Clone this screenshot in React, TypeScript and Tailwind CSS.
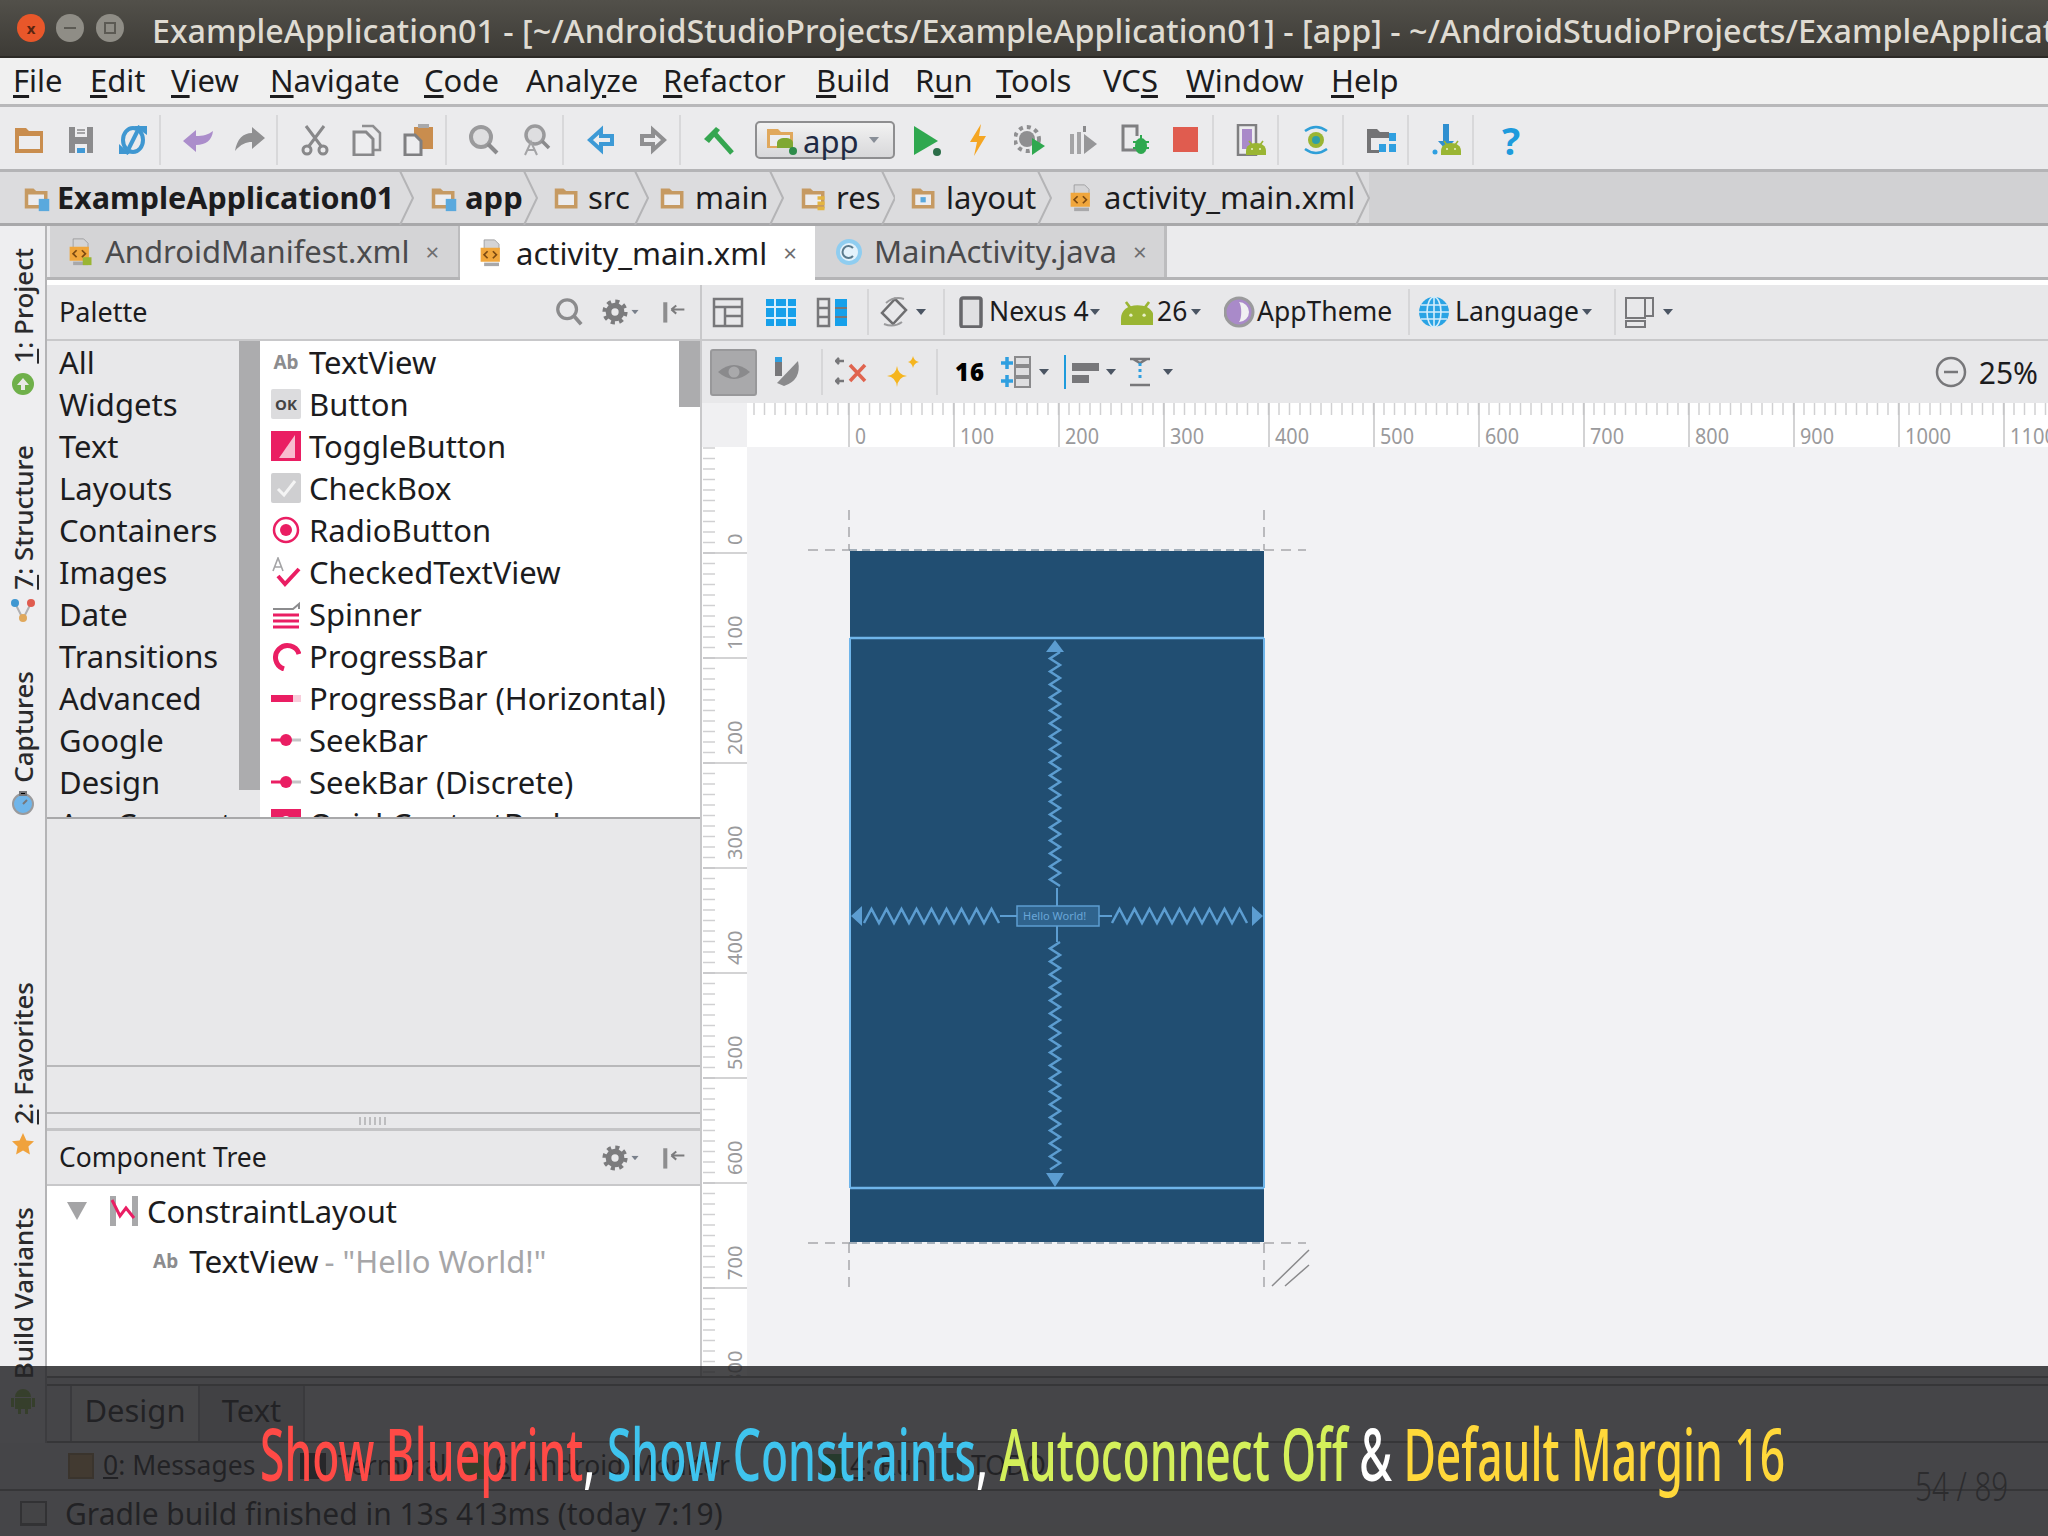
import type { ReactNode } from 'react'

function Ico({ children, className = '' }: { children: ReactNode; className?: string }) {
  return (
    <svg viewBox="0 0 32 32" className={`w-8 h-8 shrink-0 ${className}`}>
      {children}
    </svg>
  )
}

function Arrow({ className = '' }: { className?: string }) {
  return (
    <svg viewBox="0 0 10 6" className={`w-[10px] h-[6px] shrink-0 ${className}`}>
      <path d="M0 0h10L5 6z" fill="#4b5563" />
    </svg>
  )
}

function Sep({ className = '' }: { className?: string }) {
  return <div className={`w-[2px] h-[46px] bg-[#d6d6d8] shrink-0 ${className}`} />
}

function Droid({ x = 0, y = 0, s = 1 }: { x?: number; y?: number; s?: number }) {
  return (
    <g transform={`translate(${x} ${y}) scale(${s})`}>
      <path d="M3 0l3 4M17 0l-3 4" stroke="#9ab533" strokeWidth="1.6" />
      <path d="M0 14V10C0 5 4 2 10 2s10 3 10 8v4z" fill="#9ab533" />
      <circle cx="6" cy="8" r="1" fill="#e8f0c8" />
      <circle cx="14" cy="8" r="1" fill="#e8f0c8" />
    </g>
  )
}

function Gear() {
  return (
    <Ico className="!w-[26px] !h-[26px]">
      <circle cx="16" cy="16" r="8" fill="none" stroke="#7b7b7d" strokeWidth="7" />
      <circle cx="16" cy="16" r="13" fill="none" stroke="#7b7b7d" strokeWidth="5" strokeDasharray="5 5.2" />
    </Ico>
  )
}

function Pin() {
  return (
    <Ico className="!w-[26px] !h-[26px]">
      <rect x="4" y="4" width="5" height="25" fill="#8d8d8f" />
      <path d="M14 13h16M14 13l6-5M14 13l6 5" stroke="#7b7b7d" strokeWidth="2.5" fill="none" />
    </Ico>
  )
}

function FolderSmall({ color = '#c69a62', badge }: { color?: string; badge?: string }) {
  return (
    <Ico className="!w-7 !h-7">
      <path d="M2 5h10l3 3h13v20H2z" fill={color} />
      <rect x="6" y="12" width="18" height="12" fill="#ececee" />
      {badge === 'blue' && <rect x="18" y="17" width="12" height="14" fill="#5aa9dd" />}
      {badge === 'res' && <path d="M20 14h8v4h-8zM20 20h8v4h-8zM20 26h8v4h-8z" fill="#e3b541" />}
      {badge === 'layout' && <rect x="12" y="15" width="6" height="6" fill="#5aa9dd" />}
    </Ico>
  )
}

function XmlFile({ dim = false }: { dim?: boolean }) {
  return (
    <Ico className="!w-7 !h-7">
      <path d="M7 1h12l5 5v6H7z" fill="#d4d4d6" stroke="#9a9a9c" />
      <rect x="3" y="10" width="22" height="16" fill="#f0a63c" />
      <path d="M11 14l-4 4 4 4M17 14l4 4-4 4" stroke="#7c4a12" strokeWidth="2" fill="none" />
      <rect x="7" y="27" width="17" height="4" fill="#a8a8aa" />
      {dim && <path d="M18 22h10v9H18z" fill="#9ab533" />}
    </Ico>
  )
}

const menus = [
  { pre: '', u: 'F', post: 'ile', w: 'w-[77px]' },
  { pre: '', u: 'E', post: 'dit', w: 'w-[81px]' },
  { pre: '', u: 'V', post: 'iew', w: 'w-[99px]' },
  { pre: '', u: 'N', post: 'avigate', w: 'w-[154px]' },
  { pre: '', u: 'C', post: 'ode', w: 'w-[102px]' },
  { pre: 'Anal', u: 'y', post: 'ze', w: 'w-[137px]' },
  { pre: '', u: 'R', post: 'efactor', w: 'w-[153px]' },
  { pre: '', u: 'B', post: 'uild', w: 'w-[99px]' },
  { pre: 'R', u: 'u', post: 'n', w: 'w-[81px]' },
  { pre: '', u: 'T', post: 'ools', w: 'w-[107px]' },
  { pre: 'VC', u: 'S', post: '', w: 'w-[83px]' },
  { pre: '', u: 'W', post: 'indow', w: 'w-[145px]' },
  { pre: '', u: 'H', post: 'elp', w: 'w-auto' },
]

const crumbs = [
  { label: 'ExampleApplication01', w: 'w-[415px] pl-[23px]', bold: true, color: '#c69a62', badge: 'blue', gap: 'ml-[6px] text-[30.500px]' },
  { label: 'app', w: 'w-[123px] pl-[15px]', bold: true, color: '#c69a62', badge: 'blue', gap: 'ml-[7px]' },
  { label: 'src', w: 'w-[112px] pl-[15px]', bold: false, color: '#c69a62', badge: '', gap: 'ml-[7px]' },
  { label: 'main', w: 'w-[135px] pl-[9px]', bold: false, color: '#c69a62', badge: '', gap: 'ml-[8px]' },
  { label: 'res', w: 'w-[110px] pl-[15px]', bold: false, color: '#c69a62', badge: 'res', gap: 'ml-[8px]' },
  { label: 'layout', w: 'w-[158px] pl-[15px]', bold: false, color: '#c69a62', badge: 'layout', gap: 'ml-[8px]' },
]

function Chevron() {
  return (
    <svg viewBox="0 0 16 54" className="w-4 h-[54px] shrink-0 -ml-4">
      <path d="M1 0l13 27L1 54" fill="none" stroke="#b4b4b6" strokeWidth="2" />
    </svg>
  )
}

function Btn({ children }: { children: ReactNode }) {
  return <div className="w-[52px] flex justify-center shrink-0">{children}</div>
}

function BarSep() {
  return (
    <div className="w-[13px] flex justify-start shrink-0">
      <div className="w-[2px] h-[50px] bg-[#d8d8da]" />
    </div>
  )
}

function MainToolbar() {
  return (
    <div className="h-[65px] flex items-center pl-[3px] pt-[4px] bg-[#ebebed] border-b-[3px] border-[#b4b4b6]">
      <Btn>
        <Ico>
          <path d="M2 4h11l3 3h14v22H2z" fill="#c98d4e" />
          <rect x="6" y="12" width="21" height="13" fill="#ededef" />
        </Ico>
      </Btn>
      <Btn>
        <Ico>
          <path d="M4 3h24v26H4z" fill="#8b8b8d" />
          <rect x="10" y="3" width="12" height="10" fill="#ededef" />
          <path d="M12 6h8M12 9h8" stroke="#8b8b8d" strokeWidth="1.5" />
          <rect x="10" y="20" width="12" height="9" fill="#ededef" />
          <rect x="12" y="24" width="8" height="5" fill="#4099d6" />
        </Ico>
      </Btn>
      <Btn>
        <Ico>
          <ellipse cx="16" cy="16" rx="10" ry="12" fill="none" stroke="#3f97d1" strokeWidth="4" />
          <path d="M23 2L9 30" stroke="#3f97d1" strokeWidth="4" />
          <path d="M17 2h13v9zM2 30V20l11 10z" fill="#3f97d1" />
        </Ico>
      </Btn>
      <BarSep />
      <Btn>
        <Ico>
          <path d="M1 17L14 6v6c7 0 12-1 17-5-1 9-7 14-17 14v7z" fill="#ab8dcb" />
        </Ico>
      </Btn>
      <Btn>
        <Ico>
          <path d="M31 14L18 3v6C9 9 3 15 1 27c6-7 11-9 17-9v7z" fill="#8f8f91" />
        </Ico>
      </Btn>
      <BarSep />
      <Btn>
        <Ico>
          <circle cx="8" cy="26" r="4" fill="none" stroke="#88888a" strokeWidth="3" />
          <circle cx="24" cy="26" r="4" fill="none" stroke="#88888a" strokeWidth="3" />
          <path d="M10 22L25 2M22 22L7 2" stroke="#88888a" strokeWidth="3" />
        </Ico>
      </Btn>
      <Btn>
        <Ico>
          <path d="M11 2h11l7 7v17h-7" fill="none" stroke="#8f8f91" strokeWidth="2.5" />
          <path d="M3 8h12l7 7v16H3z" fill="#ededef" stroke="#88888a" strokeWidth="3" />
        </Ico>
      </Btn>
      <Btn>
        <Ico>
          <rect x="11" y="3" width="19" height="22" fill="#c98d4e" />
          <rect x="15" y="0" width="11" height="4" fill="#a8a8aa" />
          <path d="M2 11h10l6 6v14H2z" fill="#ededef" stroke="#7f7f81" strokeWidth="3" />
        </Ico>
      </Btn>
      <BarSep />
      <Btn>
        <Ico>
          <circle cx="13" cy="13" r="10" fill="#dedee0" stroke="#9a9a9c" strokeWidth="4" />
          <path d="M20 20l9 9" stroke="#8a8a8c" strokeWidth="4" />
        </Ico>
      </Btn>
      <Btn>
        <Ico>
          <circle cx="15" cy="11" r="9" fill="#dedee0" stroke="#9a9a9c" strokeWidth="3.5" />
          <path d="M22 17l7 7" stroke="#8a8a8c" strokeWidth="3.5" />
          <path d="M5 31l6-13 6 13M7 26h8" stroke="#a4a4a6" strokeWidth="2" fill="none" />
        </Ico>
      </Btn>
      <BarSep />
      <Btn>
        <Ico>
          <path d="M5 16L16 6v6h11v8H16v6z" fill="#ededef" stroke="#3d9ad6" strokeWidth="4" />
        </Ico>
      </Btn>
      <Btn>
        <Ico>
          <path d="M27 16L16 6v6H5v8h11v6z" fill="#ededef" stroke="#8f8f91" strokeWidth="4" />
        </Ico>
      </Btn>
      <BarSep />
      <Btn>
        <Ico>
          <path d="M2 15L14 3l4 3-11 13z" fill="#35a650" />
          <path d="M13 10l17 19" stroke="#35a650" strokeWidth="5" />
        </Ico>
      </Btn>
      <div className="ml-[11px] w-[140px] h-[38px] shrink-0 flex items-center rounded-[5px] border-2 border-[#8e8e90] bg-gradient-to-b from-[#f2f2f2] to-[#d8d8da]">
        <Ico className="ml-2">
          <path d="M2 5h11l3 3h12v16H2z" fill="#e0a85c" />
          <rect x="5" y="11" width="20" height="11" fill="#ededef" />
          <path d="M12 24v-5c0-3 3-5 8-5s8 2 8 5v5z" fill="#7fa832" />
          <circle cx="28" cy="27" r="4" fill="#2e8b4a" />
        </Ico>
        <span className="text-[31px] leading-none text-[#1f2a44] ml-[6px] mt-[3px]">app</span>
        <Arrow className="ml-auto mr-[14px] opacity-60" />
      </div>
      <div className="w-[5px] shrink-0" />
      <Btn>
        <Ico>
          <path d="M4 2l24 15L4 31z" fill="#2fa84f" />
          <circle cx="27" cy="28" r="4" fill="#2c6e49" />
        </Ico>
      </Btn>
      <Btn>
        <Ico>
          <path d="M19 0L8 18h7l-3 14 12-20h-7z" fill="#f5a623" />
        </Ico>
      </Btn>
      <Btn>
        <Ico>
          <circle cx="13" cy="15" r="8" fill="#8f8f91" />
          <circle cx="13" cy="15" r="12" fill="none" stroke="#8f8f91" strokeWidth="4" strokeDasharray="4 4" />
          <path d="M18 14l13 8-13 9z" fill="#2fa84f" />
        </Ico>
      </Btn>
      <Btn>
        <Ico>
          <path d="M4 10h4v20H4zM11 8h4v22h-4z" fill="#a4a4a6" />
          <path d="M18 10l13 10-13 10z" fill="#969698" />
          <path d="M17 2h3v6h-3z" fill="#8a8a8c" />
        </Ico>
      </Btn>
      <Btn>
        <Ico>
          <path d="M19 26H5V2h14v10" fill="none" stroke="#7f7f81" strokeWidth="3" />
          <ellipse cx="23" cy="22" rx="6" ry="8" fill="#2fa84f" />
          <path d="M15 18h16M15 24h16M23 11v4" stroke="#2fa84f" strokeWidth="2" />
        </Ico>
      </Btn>
      <Btn>
        <Ico>
          <rect x="3" y="3" width="25" height="25" fill="#e05c4f" />
        </Ico>
      </Btn>
      <BarSep />
      <Btn>
        <Ico>
          <rect x="3" y="1" width="18" height="30" fill="#ededef" stroke="#7f7f81" strokeWidth="2.5" />
          <rect x="7" y="5" width="10" height="20" fill="#a98ac9" />
          <Droid x={11} y={17} s={1} />
        </Ico>
      </Btn>
      <BarSep />
      <Btn>
        <Ico>
          <path d="M5 7Q16-1 27 7M5 25Q16 33 27 25" stroke="#2f9fd8" strokeWidth="2.5" fill="none" />
          <circle cx="16" cy="16" r="8" fill="#9ab533" />
          <circle cx="16" cy="16" r="4" fill="#2f9fa8" />
        </Ico>
      </Btn>
      <BarSep />
      <Btn>
        <Ico>
          <path d="M2 5h10l3 3h9v6H6v12h8v3H2z" fill="#737375" />
          <path d="M24 9h7v8h-7zM14 20h7v8h-7zM24 20h7v8h-7z" fill="#2f9fe0" />
        </Ico>
      </Btn>
      <BarSep />
      <Btn>
        <Ico>
          <path d="M13 0h6v17h5l-8 9-8-9h5z" fill="#2f8fd0" />
          <circle cx="5" cy="28" r="2.5" fill="#2f9fe0" />
          <Droid x={11} y={17} s={1} />
        </Ico>
      </Btn>
      <BarSep />
      <Btn>
        <span className="text-[38px] leading-none font-bold text-[#1e9bdc]">?</span>
      </Btn>
    </div>
  )
}

const categories = ['All', 'Widgets', 'Text', 'Layouts', 'Containers', 'Images', 'Date', 'Transitions', 'Advanced', 'Google', 'Design', 'AppCompat']

const PINK = '#ea1e63'

const widgets: { label: string; icon: ReactNode }[] = [
  { label: 'TextView', icon: <span className="text-[19px] font-bold text-[#8c8c8e]">Ab</span> },
  {
    label: 'Button',
    icon: (
      <span className="w-[30px] h-[30px] flex items-center justify-center bg-[#dcdcde] rounded-[2px] text-[15px] font-bold text-[#444]">OK</span>
    ),
  },
  {
    label: 'ToggleButton',
    icon: (
      <svg viewBox="0 0 30 30" className="w-[30px] h-[30px]">
        <rect width="30" height="30" fill={PINK} />
        <path d="M8 27L24 4v23z" fill="#f8bcd0" />
      </svg>
    ),
  },
  {
    label: 'CheckBox',
    icon: (
      <svg viewBox="0 0 30 30" className="w-[30px] h-[30px]">
        <rect width="30" height="30" rx="2" fill="#cfcfd1" />
        <path d="M7 16l6 6 11-14" stroke="#f4f4f4" strokeWidth="3" fill="none" />
      </svg>
    ),
  },
  {
    label: 'RadioButton',
    icon: (
      <svg viewBox="0 0 30 30" className="w-[30px] h-[30px]">
        <circle cx="15" cy="15" r="12" fill="none" stroke={PINK} strokeWidth="2.500" />
        <circle cx="15" cy="15" r="6" fill={PINK} />
      </svg>
    ),
  },
  {
    label: 'CheckedTextView',
    icon: (
      <svg viewBox="0 0 30 30" className="w-[30px] h-[30px]">
        <path d="M2 14L7 1l5 13M4 10h6" stroke="#a4a4a6" strokeWidth="1.6" fill="none" />
        <path d="M7 19l7 8L28 12" stroke={PINK} strokeWidth="4" fill="none" />
      </svg>
    ),
  },
  {
    label: 'Spinner',
    icon: (
      <svg viewBox="0 0 30 30" className="w-[30px] h-[30px]">
        <path d="M2 10h20l6-5v5" stroke="#8c8c8e" strokeWidth="2" fill="none" />
        <path d="M2 16h26M2 22h26M2 28h26" stroke={PINK} strokeWidth="3" />
      </svg>
    ),
  },
  {
    label: 'ProgressBar',
    icon: (
      <svg viewBox="0 0 30 30" className="w-[30px] h-[30px]">
        <path d="M28 13A12 12 0 1 0 13 28" fill="none" stroke={PINK} strokeWidth="5" />
      </svg>
    ),
  },
  {
    label: 'ProgressBar (Horizontal)',
    icon: (
      <svg viewBox="0 0 30 30" className="w-[30px] h-[30px]">
        <rect x="-2" y="12" width="24" height="7" fill={PINK} />
        <rect x="22" y="12" width="8" height="7" fill="#f8cddb" />
      </svg>
    ),
  },
  {
    label: 'SeekBar',
    icon: (
      <svg viewBox="0 0 30 30" className="w-[30px] h-[30px]">
        <path d="M-2 15h16" stroke={PINK} strokeWidth="3" />
        <path d="M18 15h12" stroke="#c4c4c6" strokeWidth="3" />
        <circle cx="15" cy="15" r="6" fill={PINK} />
      </svg>
    ),
  },
  {
    label: 'SeekBar (Discrete)',
    icon: (
      <svg viewBox="0 0 30 30" className="w-[30px] h-[30px]">
        <path d="M-2 15h16" stroke={PINK} strokeWidth="3" />
        <path d="M18 15h12" stroke="#c4c4c6" strokeWidth="3" />
        <circle cx="15" cy="15" r="6" fill={PINK} />
      </svg>
    ),
  },
  {
    label: 'QuickContactBadge',
    icon: (
      <svg viewBox="0 0 30 30" className="w-[30px] h-[30px]">
        <rect width="30" height="30" fill={PINK} />
        <circle cx="15" cy="12" r="5" fill="#fff" />
      </svg>
    ),
  },
]

function PalettePanel() {
  return (
    <div className="w-[655px] shrink-0 flex flex-col bg-[#e8e8ea] border-r-2 border-[#c8c8ca] text-[#1c1c1e]">
      <div className="h-[56px] shrink-0 flex items-center pl-3 border-b-2 border-[#c8c8ca]">
        <span className="text-[27px]">Palette</span>
        <Ico className="ml-auto !w-[30px] !h-[30px]">
          <circle cx="14" cy="13" r="10" fill="none" stroke="#8b8b8d" strokeWidth="3.5" />
          <path d="M21 20l8 9" stroke="#8b8b8d" strokeWidth="4" />
        </Ico>
        <div className="ml-[18px]"><Gear /></div>
        <Arrow className="ml-[2px] scale-75 opacity-70" />
        <div className="ml-[20px] mr-[14px]"><Pin /></div>
      </div>
      <div className="h-[478px] shrink-0 flex overflow-hidden border-b-2 border-[#a8a8aa]">
        <div className="w-[192px] shrink-0 pl-3 text-[31px]">
          {categories.map((c) => (
            <div key={c} className="h-[42px] flex items-center whitespace-nowrap">{c}</div>
          ))}
        </div>
        <div className="w-[21px] shrink-0 h-[449px] bg-[#acacae]" />
        <div className="flex-1 bg-white pl-[11px] text-[31px]">
          {widgets.map((w) => (
            <div key={w.label} className="h-[42px] flex items-center whitespace-nowrap">
              <div className="w-[30px] flex justify-center shrink-0">{w.icon}</div>
              <span className="ml-[8px]">{w.label}</span>
            </div>
          ))}
        </div>
        <div className="w-[21px] shrink-0 bg-white">
          <div className="h-[66px] bg-[#acacae]" />
        </div>
      </div>
      <div className="h-[248px] shrink-0 border-b-2 border-[#b8b8ba]" />
      <div className="h-[47px] shrink-0 border-b-2 border-[#b8b8ba]" />
      <div className="h-[17px] shrink-0 flex items-center justify-center border-b-[3px] border-[#c4c4c6]">
        <div className="w-[30px] h-[8px] bg-[repeating-linear-gradient(90deg,#bdbdbf_0_2px,transparent_2px_5px)]" />
      </div>
      <div className="h-[55px] shrink-0 flex items-center pl-3 border-b-2 border-[#c8c8ca]">
        <span className="text-[26.500px]">Component Tree</span>
        <div className="ml-auto"><Gear /></div>
        <Arrow className="ml-[2px] scale-75 opacity-70" />
        <div className="ml-[20px] mr-[14px]"><Pin /></div>
      </div>
      <div className="flex-1 bg-white">
        <div className="h-[50px] flex items-center pl-[20px]">
          <svg viewBox="0 0 20 18" className="w-5 h-[18px] shrink-0">
            <path d="M0 0h20L10 18z" fill="#a4a4a6" />
          </svg>
          <svg viewBox="0 0 30 30" className="w-[30px] h-[30px] ml-[22px] shrink-0">
            <path d="M1 0h6v30H1zM23 0h6v30h-6z" fill="#a8a8aa" />
            <path d="M3 4l8 16 6-8 8 10" stroke={PINK} strokeWidth="3" fill="none" />
          </svg>
          <span className="text-[31px] ml-[8px]">ConstraintLayout</span>
        </div>
        <div className="h-[50px] flex items-center pl-[106px] whitespace-nowrap">
          <span className="text-[19px] font-bold text-[#8c8c8e]">Ab</span>
          <span className="text-[31.500px] ml-[11px]">TextView</span>
          <span className="text-[31px] text-[#a6a6a8] ml-[6px]">- "Hello World!"</span>
        </div>
      </div>
    </div>
  )
}

function DesignBarTop() {
  return (
    <div className="h-[56px] shrink-0 flex items-center border-b-2 border-[#c8c8ca] text-[26.500px] text-[#1c1c1e] whitespace-nowrap">
      <Ico className="ml-[10px]">
        <path d="M2 3h28v27H2zM2 11h28M13 11v19M13 20h17" fill="none" stroke="#77777a" strokeWidth="2.5" />
      </Ico>
      <Ico className="ml-[21px]">
        <rect x="1" y="3" width="30" height="27" fill="#16a0ea" />
        <path d="M10 3v27M22 3v27M1 11h30M1 22h30" stroke="#d8eefb" strokeWidth="2" />
      </Ico>
      <Ico className="ml-[19px]">
        <path d="M2 3h11v27H2zM2 12h11M2 21h11" fill="none" stroke="#77777a" strokeWidth="2.5" />
        <rect x="19" y="3" width="12" height="27" fill="#16a0ea" />
        <path d="M19 12h12M19 21h12" stroke="#77777a" strokeWidth="2" />
      </Ico>
      <Sep className="ml-[19px]" />
      <Ico className="ml-[9px]">
        <path d="M17 3l11 11-13 14L4 17z" fill="none" stroke="#6e6e70" strokeWidth="2.5" />
        <path d="M8 7Q16 0 26 3M24 26Q16 32 6 28" fill="none" stroke="#9a9a9c" strokeWidth="2" />
      </Ico>
      <Arrow className="ml-[6px]" />
      <Sep className="ml-[17px]" />
      <Ico className="ml-[14px]">
        <rect x="2" y="2" width="20" height="29" rx="2" fill="#e0e0e2" stroke="#66666a" strokeWidth="3.5" />
      </Ico>
      <span className="-ml-[2px] w-[97px]">Nexus 4</span>
      <Arrow className="ml-[4px]" />
      <Ico className="ml-[21px]"><Droid x={0} y={6} s={1.65} /></Ico>
      <span className="ml-[4px] w-[27px]">26</span>
      <Arrow className="ml-[7px]" />
      <Ico className="ml-[23px]">
        <circle cx="15" cy="16" r="14" fill="#a98ac9" stroke="#9a9a9c" strokeWidth="3" />
        <path d="M15 6a10 10 0 0 1 0 20c3-4 3-16 0-20z" fill="#f0f0f2" />
      </Ico>
      <span className="ml-[1px] w-[135px]">AppTheme</span>
      <Sep className="ml-[16px]" />
      <Ico className="ml-[8px]">
        <circle cx="16" cy="16" r="15" fill="#2aa3e4" />
        <path d="M1 16h30M16 1v30M3 9h26M3 23h26" stroke="#d4edfb" strokeWidth="1.6" />
        <ellipse cx="16" cy="16" rx="7" ry="15" fill="none" stroke="#d4edfb" strokeWidth="1.6" />
      </Ico>
      <span className="ml-[5px] w-[120px]">Language</span>
      <Arrow className="ml-[7px]" />
      <Sep className="ml-[22px]" />
      <Ico className="ml-[8px]">
        <path d="M2 2h19v20H2zM21 2h8v18h-8M2 25h19v6H2z" fill="none" stroke="#77777a" strokeWidth="2" />
      </Ico>
      <Arrow className="ml-[7px]" />
    </div>
  )
}

function DesignBarBottom() {
  return (
    <div className="h-[62px] shrink-0 flex items-center">
      <div className="ml-[8px] w-[47px] h-[47px] flex items-center justify-center rounded-[3px] bg-[#a9a9ab] border-2 border-[#98989a]">
        <Ico>
          <path d="M0 16Q16 2 32 16 16 30 0 16z" fill="#8a8a8c" />
          <circle cx="16" cy="16" r="5.500" fill="#a9a9ab" />
        </Ico>
      </div>
      <Ico className="ml-[13px]">
        <path d="M5 6h7v14H5z" fill="#77777a" />
        <path d="M5 1h7v5H5z" fill="#2f9fe0" />
        <path d="M28 5Q32 24 14 30L7 27 28 5z" fill="#8a8a8c" />
      </Ico>
      <Sep className="ml-[19px]" />
      <Ico className="ml-[12px]">
        <path d="M1 5h8M4 2L1 5l3 3M1 25h8M4 22l-3 3 3 3" stroke="#77777a" strokeWidth="2.5" fill="none" />
        <path d="M15 9l15 16M30 9L15 25" stroke="#e0644f" strokeWidth="3.5" />
      </Ico>
      <Ico className="ml-[20px]">
        <path d="M0 20q9-1 10-10 1 9 10 10-9 1-10 11-1-10-10-11zM21 6q4-1 5-6 1 5 6 6-5 1-6 6-1-5-5-6z" fill="#f5b51f" />
      </Ico>
      <Sep className="ml-[17px]" />
      <span className="ml-[17px] w-[26px] text-[24px] leading-none font-black text-black tracking-[1px]">16</span>
      <Ico className="ml-[20px]">
        <path d="M14 1h15v8H14zM14 11h15v9H14zM14 22h15v9H14z" fill="#dedee0" stroke="#8a8a8c" strokeWidth="2" />
        <path d="M6 1v12M0 7h12M6 19v12M0 25h12" stroke="#2f9fe0" strokeWidth="3.5" />
      </Ico>
      <Arrow className="ml-[6px]" />
      <div className="w-[2px] h-[34px] bg-[#1e9bdc] ml-[15px]" />
      <Ico className="ml-[5px]">
        <path d="M1 7h27v8H1zM1 19h17v8H1z" fill="#77777a" />
      </Ico>
      <Arrow className="ml-[3px]" />
      <Ico className="ml-[8px] !w-[32px]">
        <path d="M6 3h20M9 3l7 4 7-4M6 29h20" stroke="#77777a" strokeWidth="2.5" fill="none" />
        <path d="M16 7v18" stroke="#2f9fe0" strokeWidth="3" strokeDasharray="3 3" />
      </Ico>
      <Arrow className="ml-[7px]" />
      <div className="ml-auto flex items-center pr-[10px]">
        <Ico>
          <circle cx="16" cy="16" r="14" fill="none" stroke="#77777a" strokeWidth="2.5" />
          <path d="M9 16h14" stroke="#77777a" strokeWidth="2.5" />
        </Ico>
        <span className="ml-[12px] text-[30px] text-[#1c1c1e]">25%</span>
      </div>
    </div>
  )
}

function TopRuler() {
  const majors = Array.from({ length: 12 }, (_, i) => i)
  const minors = Array.from({ length: 130 }, (_, i) => i)
  return (
    <svg viewBox="702 403 1346 44" className="w-[1346px] h-[44px] shrink-0 block">
      <rect x="702" y="403" width="1346" height="44" fill="#fff" />
      <rect x="702" y="403" width="45" height="44" fill="#f0f0f2" />
      {minors.map((i) => (
        <path key={i} d={`M${754 + i * 10.5} 403v12`} stroke="#d0d0d2" strokeWidth="1.5" />
      ))}
      {majors.map((i) => (
        <g key={i}>
          <path d={`M${849 + i * 105} 403v44`} stroke="#c4c4c6" strokeWidth="1.5" />
          <text x={855 + i * 105} y={444} fontSize="22" fill="#9a9a9c" textLength={i === 0 ? 11 : i < 10 ? 34 : 46} lengthAdjust="spacingAndGlyphs">
            {i * 100}
          </text>
        </g>
      ))}
    </svg>
  )
}

function LeftRuler() {
  const majors = Array.from({ length: 9 }, (_, i) => i)
  const minors = Array.from({ length: 90 }, (_, i) => i)
  return (
    <svg viewBox="702 447 45 929" className="w-[45px] h-[929px] shrink-0 block">
      <rect x="702" y="447" width="45" height="929" fill="#fff" />
      {minors.map((i) => (
        <path key={i} d={`M703 ${448 + i * 10.5}h12`} stroke="#d0d0d2" strokeWidth="1.5" />
      ))}
      {majors.map((i) => (
        <g key={i}>
          <path d={`M703 ${553 + i * 105}h44`} stroke="#c4c4c6" strokeWidth="1.5" />
          <text transform={`translate(742 ${545 + i * 105}) rotate(-90)`} fontSize="20" fill="#9a9a9c">
            {i * 100}
          </text>
        </g>
      ))}
    </svg>
  )
}

function zigV(x: number, y1: number, y2: number) {
  const pts: string[] = []
  let side = 1
  for (let y = y1; y < y2; y += 6.5) {
    pts.push(`${x + side * 5},${y}`)
    side = -side
  }
  return pts.join(' ')
}

function zigH(x1: number, x2: number, y: number) {
  const pts: string[] = []
  let side = 1
  for (let x = x1; x < x2; x += 7.5) {
    pts.push(`${x},${y + side * 7}`)
    side = -side
  }
  return pts.join(' ')
}

function Blueprint() {
  const line = '#6fb5ea'
  const spring = '#5c9dd1'
  return (
    <svg viewBox="747 447 1301 929" className="w-[1301px] h-[929px] block">
      <rect x="747" y="447" width="1301" height="929" fill="#f2f2f4" />
      <g stroke="#a8a8aa" strokeWidth="1.5" strokeDasharray="10 7" fill="none">
        <path d="M808 550H850M1264 550H1306M808 1243H850M1264 1243H1306" />
        <path d="M849 510V550M1264 510V550M849 1243V1288M1264 1243V1288" />
      </g>
      <rect x="850" y="551" width="414" height="691" fill="#214e72" />
      <path d="M849 550H1264M849 1243H1264" stroke="#8c9aa6" strokeWidth="1.5" strokeDasharray="8 5" />
      <path d="M850 638V1188M1264 638V1188" stroke={line} strokeWidth="2" />
      <path d="M850 638H1264M850 1188H1264" stroke={line} strokeWidth="2.5" />
      <polyline points={zigV(1055, 652, 890)} fill="none" stroke={spring} strokeWidth="2.5" />
      <polyline points={zigV(1055, 942, 1172)} fill="none" stroke={spring} strokeWidth="2.5" />
      <polyline points={zigH(864, 1000, 916)} fill="none" stroke={spring} strokeWidth="2.5" />
      <polyline points={zigH(1112, 1250, 916)} fill="none" stroke={spring} strokeWidth="2.5" />
      <path d="M1055 640l-9 12h18zM1055 1187l-9-14h18zM851 916l11-10v20zM1263 916l-11-10v20z" fill={spring} />
      <path d="M1057 888v18M1057 926v16M1000 916h17M1099 916h13" stroke={spring} strokeWidth="2" />
      <rect x="1017" y="906" width="82" height="20" fill="#2f638d" stroke={spring} strokeWidth="1.5" />
      <text x="1023" y="920" fontSize="11" fill="#6aa6d8">Hello World!</text>
      <path d="M1272 1286l37-36M1285 1286l24-21" stroke="#8a8a8c" strokeWidth="1.5" />
    </svg>
  )
}

function StripItem({ className, text, icon }: { className: string; text: ReactNode; icon: ReactNode }) {
  return (
    <div className={`shrink-0 flex flex-col items-center gap-[8px] ${className}`}>
      <span className="[writing-mode:vertical-rl] rotate-180 whitespace-nowrap leading-[44px]">{text}</span>
      {icon}
    </div>
  )
}

function Strip() {
  return (
    <div className="w-[47px] shrink-0 flex flex-col pt-[22px] bg-[#eeeef0] border-r-2 border-[#b4b4b6] text-[26px] font-medium text-[#2a2a2c] overflow-hidden">
      <StripItem
        className="h-[197px]"
        text={<><u>1</u>: Project</>}
        icon={
          <svg viewBox="0 0 24 24" className="w-6 h-6">
            <circle cx="12" cy="12" r="11" fill="#6fb04a" />
            <path d="M12 6l6 7h-4v5h-4v-5H6z" fill="#e8e8e8" />
          </svg>
        }
      />
      <StripItem
        className="h-[226px]"
        text={<><u>7</u>: Structure</>}
        icon={
          <svg viewBox="0 0 24 24" className="w-6 h-6">
            <path d="M4 5l8 16 8-16" stroke="#b0b0b2" strokeWidth="2" fill="none" />
            <circle cx="4" cy="5" r="4" fill="#3f97d1" />
            <circle cx="20" cy="5" r="4" fill="#e05c4f" />
            <circle cx="12" cy="20" r="4" fill="#e0a85c" />
          </svg>
        }
      />
      <StripItem
        className="h-[311px]"
        text="Captures"
        icon={
          <svg viewBox="0 0 24 24" className="w-6 h-6">
            <circle cx="12" cy="13" r="10" fill="#6fb5ea" stroke="#9a9a9c" strokeWidth="2" />
            <path d="M9 1h6v3H9zM12 13l4-4" stroke="#77777a" strokeWidth="2" />
          </svg>
        }
      />
      <StripItem
        className="h-[225px]"
        text={<><u>2</u>: Favorites</>}
        icon={
          <svg viewBox="0 0 24 24" className="w-6 h-6">
            <path d="M12 1l3.4 7.4 7.6.9-5.6 5.3 1.500 8L12 18.500 5.100 22.600l1.500-8L1 9.300l7.600-.9z" fill="#f0a23c" />
          </svg>
        }
      />
      <StripItem
        className="h-[240px]"
        text="Build Variants"
        icon={
          <svg viewBox="0 0 24 28" className="w-6 h-7">
            <path d="M4 10a8 8 0 0 1 16 0zM4 11h16v11H4zM0 11h3v9H0zM21 11h3v9h-3zM7 22h3v5H7zM14 22h3v5h-3z" fill="#8fc04a" />
          </svg>
        }
      />
    </div>
  )
}

function App() {
  return (
    <div className="relative w-[2048px] h-[1536px] overflow-hidden flex flex-col bg-[#e8e8ea] font-['Noto_Sans',sans-serif] text-[#1c1c1e]">
      {/* title bar */}
      <div className="h-[58px] shrink-0 flex items-center bg-gradient-to-b from-[#52504a] to-[#3d3b36] text-[#dfdbd2] border-b-2 border-[#2c2a26] overflow-hidden">
        <div className="ml-[17px] w-[28px] h-[28px] rounded-full bg-[#e8572a] flex items-center justify-center text-[15px] font-bold text-[#5a2410] shrink-0">x</div>
        <div className="ml-[11px] w-[28px] h-[28px] rounded-full bg-[#8f8d86] flex items-center justify-center shrink-0">
          <div className="w-[12px] h-[2px] bg-[#5c5a54]" />
        </div>
        <div className="ml-[12px] w-[28px] h-[28px] rounded-full bg-[#8f8d86] flex items-center justify-center shrink-0">
          <div className="w-[12px] h-[12px] border-2 border-[#5c5a54]" />
        </div>
        <span className="ml-[28px] mt-[4px] text-[32.300px] font-medium whitespace-nowrap">
          ExampleApplication01 - [~/AndroidStudioProjects/ExampleApplication01] - [app] - ~/AndroidStudioProjects/ExampleApplication01/app/src/main/res/layout/activity_main.xml
        </span>
      </div>

      {/* menu */}
      <div className="h-[49px] shrink-0 flex items-center pl-[13px] bg-[#f0f0f0] border-b-[3px] border-[#b8b8ba] text-[31px] whitespace-nowrap">
        {menus.map((m) => (
          <div key={m.u + m.post} className={`${m.w} shrink-0 -mt-[2px]`}>
            {m.pre}
            <u className="underline-offset-[3px]">{m.u}</u>
            {m.post}
          </div>
        ))}
      </div>

      <MainToolbar />

      {/* navigation bar */}
      <div className="h-[54px] shrink-0 flex items-center bg-[#d1d1d3] border-b-[3px] border-[#a8a8aa] text-[31px] whitespace-nowrap">
        {crumbs.map((c) => (
          <div key={c.label} className={`${c.w} h-full shrink-0 flex items-center bg-[#dcdcde]`}>
            <FolderSmall color={c.color} badge={c.badge} />
            <span className={`${c.gap} ${c.bold ? 'font-bold' : ''}`}>{c.label}</span>
            <div className="ml-auto flex"><div className="w-4" /><Chevron /></div>
          </div>
        ))}
        <div className="w-[316px] h-full shrink-0 flex items-center pl-[15px] bg-[#dcdcde]">
          <XmlFile />
          <span className="ml-[8px]">activity_main.xml</span>
          <div className="ml-auto flex"><div className="w-4" /><Chevron /></div>
        </div>
      </div>

      <div className="flex h-[1217px] shrink-0">
        <Strip />
        <div className="flex-1 flex flex-col min-w-0">
          {/* editor tabs */}
          <div className="h-[54px] shrink-0 flex bg-[#ebebed] border-b-[3px] border-[#b4b4b6] text-[31px] whitespace-nowrap">
            <div className="ml-[3px] w-[410px] flex items-center pl-[17px] bg-[#d4d4d6] text-[#4a4a4c] border-r-2 border-[#bcbcbe]">
              <XmlFile dim />
              <span className="ml-[10px]">AndroidManifest.xml</span>
              <span className="ml-[16px] text-[#6e6e70] text-[24px]">×</span>
            </div>
            <div className="w-[355px] flex items-center pl-[18px] bg-white -mb-[3px]">
              <XmlFile />
              <span className="ml-[10px]">activity_main.xml</span>
              <span className="ml-[16px] text-[#6e6e70] text-[24px]">×</span>
            </div>
            <div className="w-[352px] flex items-center pl-[20px] bg-[#d4d4d6] text-[#4a4a4c] border-r-[3px] border-[#bcbcbe]">
              <svg viewBox="0 0 28 28" className="w-7 h-7 shrink-0">
                <circle cx="14" cy="14" r="13" fill="#8fcdf0" />
                <circle cx="14" cy="14" r="9" fill="#e4f2fb" />
                <path d="M18 10a6 6 0 1 0 0 8" stroke="#5a7a8c" strokeWidth="2" fill="none" />
              </svg>
              <span className="ml-[11px]">MainActivity.java</span>
              <span className="ml-[16px] text-[#6e6e70] text-[24px]">×</span>
            </div>
          </div>
          <div className="h-[5px] shrink-0 bg-white" />
          <div className="h-[1091px] shrink-0 flex bg-[#e8e8ea] overflow-hidden">
            <PalettePanel />
            <div className="flex-1 flex flex-col min-w-0">
              <DesignBarTop />
              <DesignBarBottom />
              <TopRuler />
              <div className="flex">
                <LeftRuler />
                <Blueprint />
              </div>
            </div>
          </div>
          <div className="h-[10px] shrink-0 border-y-2 border-[#8e8e90]" />
          {/* design / text tabs */}
          <div className="h-[57px] shrink-0 flex pl-[23px] text-[31px] border-b-2 border-[#8e8e90]">
            <div className="w-[128px] flex items-center justify-center pb-[6px] bg-[#f0f0f2] border-l-2 border-[#a8a8aa]">Design</div>
            <div className="w-[107px] flex items-center justify-center pb-[6px] bg-[#d0d0d2] border-x-2 border-[#a8a8aa]">Text</div>
          </div>
        </div>
      </div>

      {/* tool window buttons */}
      <div className="h-[48px] shrink-0 flex items-center pl-[68px] border-b-2 border-[#8e8e90] text-[26.500px] whitespace-nowrap">
        <div className="w-[26px] h-[26px] bg-[#d4a868] border-2 border-[#a88350] shrink-0" />
        <span className="ml-[9px] w-[197px]"><u>0</u>: Messages</span>
        <div className="w-[26px] h-[26px] bg-[#3a3a3c] shrink-0" />
        <span className="ml-[12px] w-[124px]">Terminal</span>
        <div className="w-[26px] h-[26px] rounded-t-full bg-[#8fc04a] shrink-0" />
        <span className="ml-[7px] w-[327px]"><u>6</u>: Android Monitor</span>
        <div className="w-[22px] h-[24px] bg-[#2fa84f] shrink-0" />
        <span className="ml-[6px] w-[86px]"><u>4</u>: Run</span>
        <div className="w-[26px] h-[26px] bg-[#88888a] shrink-0" />
        <span className="ml-[9px]">TODO</span>
      </div>

      {/* status bar */}
      <div className="flex-1 flex items-center pl-[20px] text-[30px] whitespace-nowrap">
        <div className="w-[27px] h-[25px] border-2 border-[#77777a] border-b-[3px] bg-[#e0e0e2] shrink-0" />
        <span className="ml-[18px]">Gradle build finished in 13s 413ms (today 7:19)</span>
      </div>

      {/* slide caption overlay */}
      <div className="absolute inset-x-0 bottom-0 h-[170px] bg-[rgba(36,36,38,0.83)]">
        <div className="absolute left-[260px] top-[50px] origin-left scale-x-[0.608] text-[73px] font-medium leading-none whitespace-nowrap">
          <span className="text-[#ff4a46]">Show Blueprint</span>
          <span className="text-white">, </span>
          <span className="text-[#3fc4ee]">Show Constraints</span>
          <span className="text-white">, </span>
          <span className="text-[#d4f05a]">Autoconnect Off</span>
          <span className="text-white"> &amp; </span>
          <span className="text-[#ffd83a]">Default Margin 16</span>
        </div>
        <div className="absolute left-[1915px] top-[100px] origin-left scale-x-[0.74] text-[40px] leading-none font-light text-[#2c2c2e] whitespace-nowrap">54 / 89</div>
      </div>
    </div>
  )
}

export default App
